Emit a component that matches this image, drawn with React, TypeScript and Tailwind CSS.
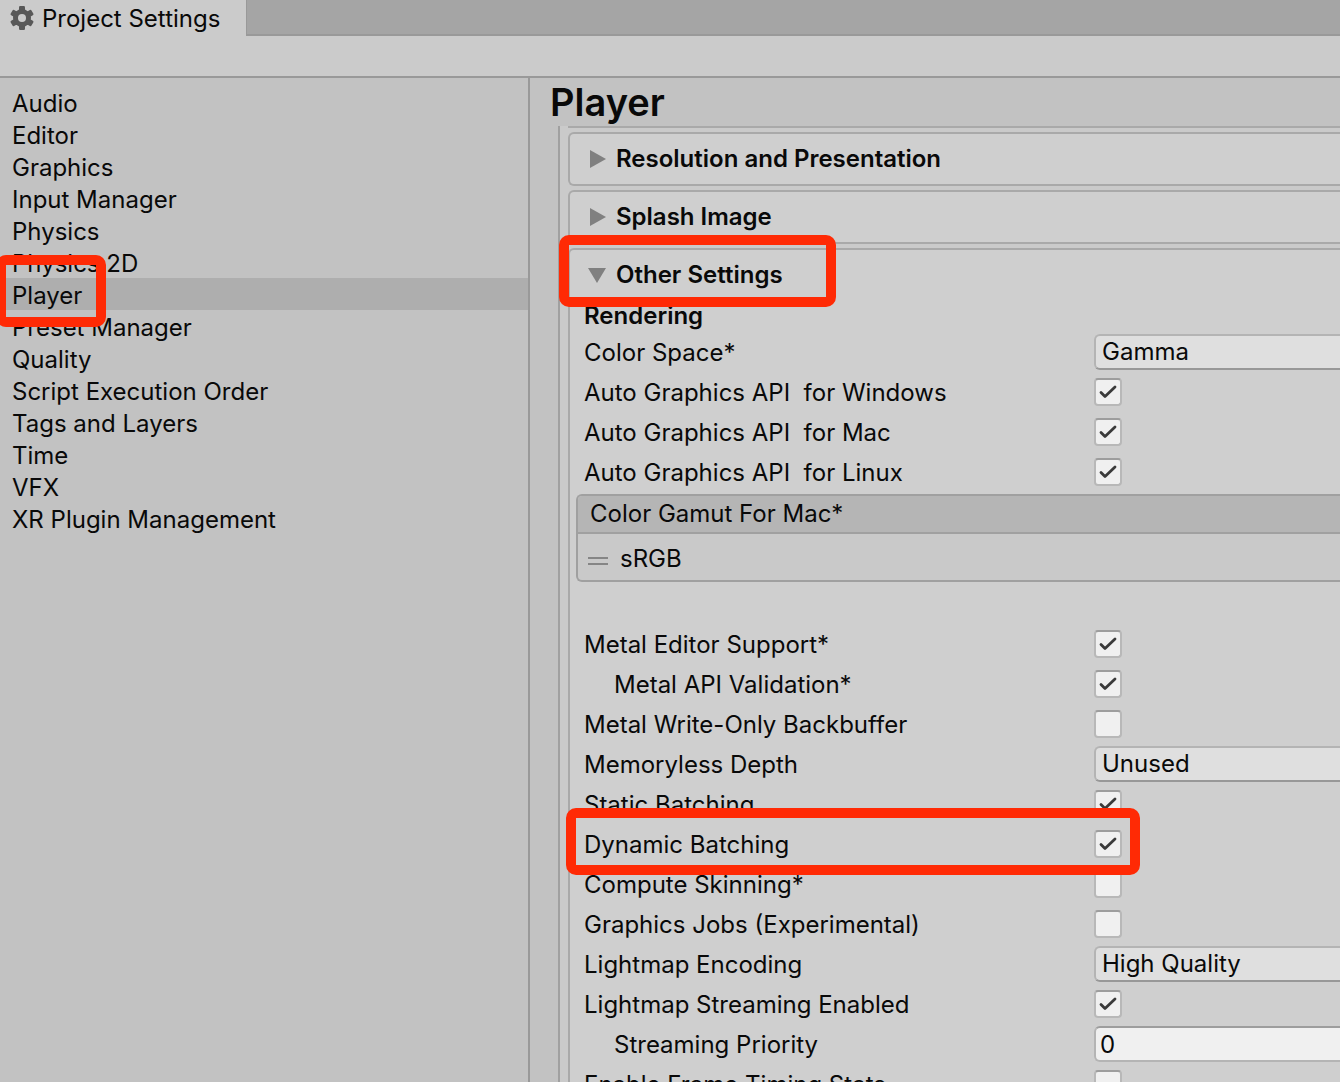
import { useState } from "react";

const categories = [
  "Audio",
  "Editor",
  "Graphics",
  "Input Manager",
  "Physics",
  "Physics 2D",
  "Player",
  "Preset Manager",
  "Quality",
  "Script Execution Order",
  "Tags and Layers",
  "Time",
  "VFX",
  "XR Plugin Management",
];

type Setting = {
  id: string;
  label: string;
  kind: "check" | "select" | "number";
  checked?: boolean;
  value?: string;
  options?: string[];
  indent?: boolean;
  marked?: boolean;
};

const graphicsSettings: Setting[] = [
  { id: "color-space", label: "Color Space*", kind: "select", options: ["Gamma", "Linear"] },
  { id: "api-windows", label: "Auto Graphics API  for Windows", kind: "check", checked: true },
  { id: "api-mac", label: "Auto Graphics API  for Mac", kind: "check", checked: true },
  { id: "api-linux", label: "Auto Graphics API  for Linux", kind: "check", checked: true },
];

const renderSettings: Setting[] = [
  { id: "metal-editor", label: "Metal Editor Support*", kind: "check", checked: true },
  { id: "metal-validation", label: "Metal API Validation*", kind: "check", checked: true, indent: true },
  { id: "metal-write-only", label: "Metal Write-Only Backbuffer", kind: "check" },
  { id: "memoryless", label: "Memoryless Depth", kind: "select", options: ["Unused", "Forced", "Automatic"] },
  { id: "static-batching", label: "Static Batching", kind: "check", checked: true },
  { id: "dynamic-batching", label: "Dynamic Batching", kind: "check", checked: true, marked: true },
  { id: "compute-skinning", label: "Compute Skinning*", kind: "check" },
  { id: "graphics-jobs", label: "Graphics Jobs (Experimental)", kind: "check" },
  { id: "lightmap-encoding", label: "Lightmap Encoding", kind: "select", options: ["High Quality", "Normal Quality", "Low Quality"] },
  { id: "lightmap-streaming", label: "Lightmap Streaming Enabled", kind: "check", checked: true },
  { id: "streaming-priority", label: "Streaming Priority", kind: "number", value: "0", indent: true },
  { id: "frame-timing", label: "Enable Frame Timing Stats", kind: "check" },
];

function GearIcon() {
  return (
    <svg viewBox="0 0 24 24" className="size-6 shrink-0" aria-hidden="true">
      <g fill="#585858">
        <rect x="9" y="0" width="6" height="24" rx="1.2" />
        <rect x="9" y="0" width="6" height="24" rx="1.2" transform="rotate(60 12 12)" />
        <rect x="9" y="0" width="6" height="24" rx="1.2" transform="rotate(120 12 12)" />
        <circle cx="12" cy="12" r="9" />
      </g>
      <circle cx="12" cy="12" r="4" fill="#cbcbcb" />
    </svg>
  );
}

function Foldout({ open }: { open?: boolean }) {
  return (
    <svg viewBox="0 0 18 18" className="size-[18px] shrink-0" aria-hidden="true">
      <path d={open ? "M0 2H18L9 17Z" : "M2 0V18L18 9Z"} fill="#808080" />
    </svg>
  );
}

function Toggle({ id, initial }: { id: string; initial: boolean }) {
  const [on, setOn] = useState(initial);
  return (
    <span className="relative flex size-7 shrink-0">
      <input
        id={id}
        type="checkbox"
        checked={on}
        onChange={() => setOn(!on)}
        className="size-7 appearance-none rounded-[4px] border-2 border-[#b8b8b8] border-t-[#9d9d9d] bg-[#f0f0f0]"
      />
      {on && (
        <svg viewBox="0 0 28 28" className="pointer-events-none absolute inset-0" aria-hidden="true">
          <path d="M7 14.500L11 18.500L21 9" fill="none" stroke="#3a3a3a" strokeWidth="2.8" strokeLinecap="round" strokeLinejoin="round" />
        </svg>
      )}
    </span>
  );
}

function SettingRow({ s }: { s: Setting }) {
  return (
    <div className="relative flex h-10 items-center pl-[14px]">
      <label htmlFor={s.id} className={`w-[510px] shrink-0 whitespace-pre pt-0.5 ${s.indent ? "pl-[30px]" : ""}`}>
        {s.label}
      </label>
      {s.kind === "check" && <Toggle id={s.id} initial={!!s.checked} />}
      {s.kind === "select" && (
        <select
          id={s.id}
          className="h-9 min-w-0 flex-1 appearance-none rounded-l-[6px] border-2 border-r-0 border-[#b4b4b4] border-b-[#989898] bg-[#dfdfdf] pl-[6px]"
        >
          {s.options?.map((o) => (
            <option key={o}>{o}</option>
          ))}
        </select>
      )}
      {s.kind === "number" && (
        <input
          id={s.id}
          type="text"
          inputMode="numeric"
          defaultValue={s.value}
          className="h-9 min-w-0 flex-1 rounded-l-[6px] border-2 border-r-0 border-[#b4b4b4] border-t-[#9d9d9d] bg-[#f0f0f0] pl-1"
        />
      )}
      {s.marked && (
        <span className="pointer-events-none absolute -left-1 -top-4 z-10 h-[67px] w-[574px] rounded-[10px] border-10 border-[#ff2a05]" />
      )}
    </div>
  );
}

function ClosedSection({ title }: { title: string }) {
  return (
    <button
      type="button"
      className="flex h-[54px] shrink-0 items-center gap-[10px] rounded-l-[6px] border-2 border-r-0 border-[#a9a9a9] bg-[#cfcfcf] pl-[18px] text-left font-semibold"
    >
      <Foldout />
      {title}
    </button>
  );
}

export default function App() {
  const [selected, setSelected] = useState("Player");
  return (
    <div className="flex h-screen flex-col overflow-hidden bg-[#c2c2c2] font-['Inter',sans-serif] text-[24px] leading-8 text-[#090909]">
      <header className="flex h-9 shrink-0 bg-[#a5a5a5]">
        <button type="button" className="flex w-[246px] items-center gap-2 bg-[#cbcbcb] pl-[10px]">
          <GearIcon />
          <span className="pt-0.5">Project Settings</span>
        </button>
        <div className="flex-1 border-b-2 border-l border-[#999999]" />
      </header>
      <div className="h-[42px] shrink-0 border-b-2 border-[#999999] bg-[#cbcbcb]" />

      <div className="flex min-h-0 flex-1">
        <nav className="flex w-[530px] shrink-0 flex-col border-r-2 border-[#999999] pt-2">
          {categories.map((c) => (
            <button
              key={c}
              type="button"
              onClick={() => setSelected(c)}
              className={`relative h-8 pl-3 pt-0.5 text-left ${c === selected ? "bg-[#aeaeae]" : ""}`}
            >
              {c}
              {c === "Player" && (
                <span className="pointer-events-none absolute -left-1 -top-[23px] z-10 h-[72px] w-[110px] rounded-[10px] border-10 border-[#ff2a05]" />
              )}
            </button>
          ))}
        </nav>

        <main className="flex min-w-0 flex-1 flex-col">
          <h1 className="h-12 shrink-0 pl-5 text-[38px] leading-[48px] font-semibold">Player</h1>
          <div className="ml-7 flex min-h-0 flex-1 flex-col gap-1 border-l-2 border-[#a0a0a0] bg-[#cacaca] pl-2">
            <div className="h-0.5 shrink-0 bg-[#a9a9a9]" />
            <ClosedSection title="Resolution and Presentation" />
            <ClosedSection title="Splash Image" />
            <section className="shrink-0 rounded-tl-[6px] border-l-2 border-t-2 border-[#a9a9a9] bg-[#cfcfcf]">
              <div className="relative flex h-[50px] items-center">
                <button type="button" className="flex items-center gap-[10px] pl-[18px] font-semibold">
                  <Foldout open />
                  Other Settings
                </button>
                <span className="pointer-events-none absolute -left-[11px] -top-[15px] z-10 h-[72px] w-[277px] rounded-[10px] border-10 border-[#ff2a05]" />
              </div>
              <h2 className="pl-[14px] font-semibold">Rendering</h2>
              {graphicsSettings.map((s) => (
                <SettingRow key={s.id} s={s} />
              ))}
              <div className="mt-0.5 mb-[42px] ml-[6px] rounded-l-[6px] border-2 border-r-0 border-[#a0a0a0] bg-[#c9c9c9]">
                <div className="h-[38px] rounded-tl-[4px] border-b-2 border-[#a0a0a0] bg-[#b5b5b5] pl-3 leading-9">Color Gamut For Mac*</div>
                <div className="flex h-[46px] items-center gap-3 pl-[10px] pt-1">
                  <svg viewBox="0 0 20 8" className="mt-1 h-2 w-5" aria-hidden="true">
                    <path d="M0 1H20M0 7H20" stroke="#858585" strokeWidth="2" />
                  </svg>
                  sRGB
                </div>
              </div>
              {renderSettings.map((s) => (
                <SettingRow key={s.id} s={s} />
              ))}
            </section>
          </div>
        </main>
      </div>
    </div>
  );
}
